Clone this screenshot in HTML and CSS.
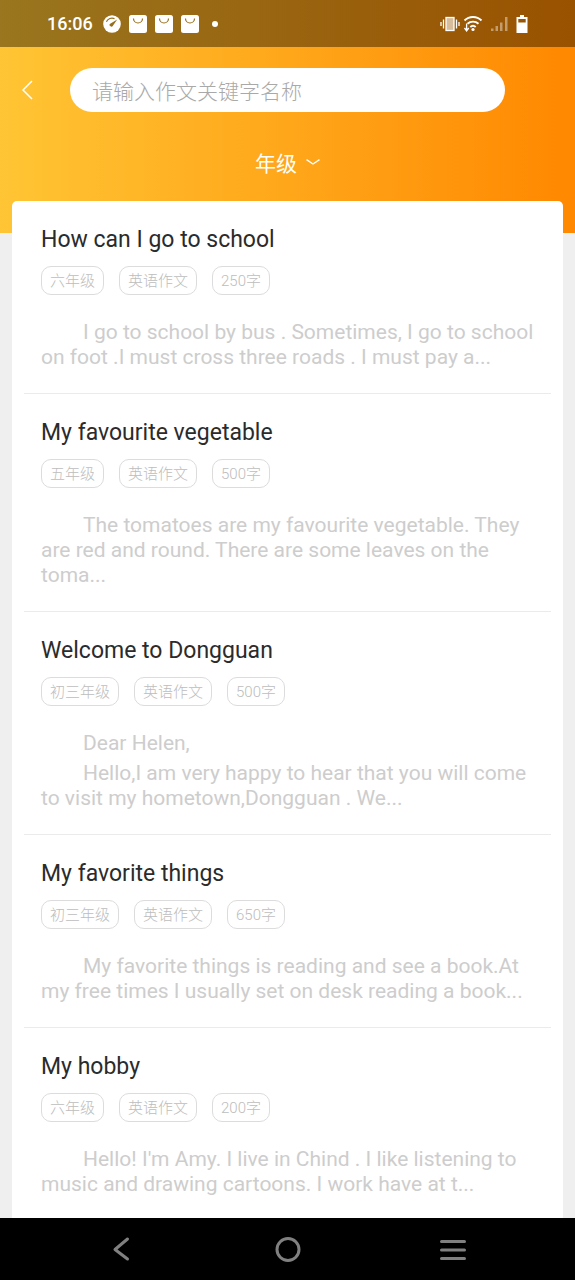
FILE: index.html
```html
<!DOCTYPE html>
<html lang="zh-CN">
<head>
<meta charset="utf-8">
<meta name="viewport" content="width=device-width, initial-scale=1">
<title>英语作文</title>
<link rel="stylesheet" href="styles.css">
</head>
<body>
<div class="screen">
  <div class="status">
    <div class="status-left">
      <span class="clock">16:06</span>
      <svg class="app-icon" viewBox="0 0 18 18"><circle cx="9" cy="9" r="8.8" fill="#fff"/><path d="M3.400 6.800A6.200 6.200 0 0 1 11.500 3.600" fill="none" stroke="#98701a" stroke-width="1.200"/><path d="M14.200 4.600 7.600 8.400a1.700 1.700 0 1 0 2.300 2.300z" fill="#98701a"/></svg>
      <svg class="app-icon" viewBox="0 0 18 18"><rect width="18" height="18" rx="2.5" fill="#fff"/><path d="M4.500 3.500a4.500 4.500 0 0 0 9 0" fill="none" stroke="#98701a" stroke-width="1.200"/></svg>
      <svg class="app-icon" viewBox="0 0 18 18"><rect width="18" height="18" rx="2.5" fill="#fff"/><path d="M4.500 3.500a4.500 4.500 0 0 0 9 0" fill="none" stroke="#98701a" stroke-width="1.200"/></svg>
      <svg class="app-icon" viewBox="0 0 18 18"><rect width="18" height="18" rx="2.5" fill="#fff"/><path d="M4.500 3.500a4.500 4.500 0 0 0 9 0" fill="none" stroke="#98701a" stroke-width="1.200"/></svg>
      <span class="more-dot"></span>
    </div>
    <svg class="status-right" viewBox="0 0 90 20">
      <g fill="none" stroke="#fff" stroke-width="1.300"><rect x="6" y="3.500" width="8" height="13" fill="#fff" fill-opacity=".6"/><path d="M3.500 5.500v9M1 8v4M16.500 5.500v9M19 8v4"/></g>
      <g fill="none" stroke="#fff" stroke-width="1.900"><path d="M24.500 6.500a12 12 0 0 1 17 0M27.500 9.800a8 8 0 0 1 11 0M30.300 13a4 4 0 0 1 5.400 0"/></g>
      <circle cx="33" cy="15.500" r="1.600" fill="#fff"/><path d="M26.600 9.500v7M24.500 14l2.100 2.800 2.100-2.800" fill="none" stroke="#fff" stroke-width="1.300"/>
      <g fill="#fff" fill-opacity=".42"><rect x="51" y="14.500" width="2.500" height="2.500"/><rect x="55.500" y="12" width="2.500" height="5"/><rect x="60" y="8.500" width="2.500" height="8.500"/><rect x="65" y="3" width="2.500" height="14"/></g>
      <path fill="#fff" fill-rule="evenodd" d="M80 1h4v2h3.500v16h-11V3H80zM78.300 5v3.500h7.400V5z"/>
    </svg>
  </div>

  <main class="page">
    <header class="top">
      <div class="search-row">
        <button class="back" type="button" aria-label="返回"><svg viewBox="0 0 12 20"><path d="M11 1 2 10l9 9" fill="none" stroke="#fff" stroke-width="1.500"/></svg></button>
        <input class="search" type="text" aria-label="搜索作文" placeholder="请输入作文关键字名称">
      </div>
      <button class="grade" type="button">年级<svg viewBox="0 0 14 6"><path d="M.5.700 7 5 13.500.700" fill="none" stroke="#fff" stroke-width="1.400"/></svg></button>
    </header>

    <section class="card">
      <article class="essay">
        <h2 class="title">How can I go to school</h2>
        <div class="tags"><span class="tag">六年级</span><span class="tag">英语作文</span><span class="tag">250字</span></div>
        <div class="excerpt"><p>I go to school by bus . Sometimes, I go to school on foot .I must cross three roads . I must pay a...</p></div>
      </article>
      <article class="essay">
        <h2 class="title">My favourite vegetable</h2>
        <div class="tags"><span class="tag">五年级</span><span class="tag">英语作文</span><span class="tag">500字</span></div>
        <div class="excerpt"><p>The tomatoes are my favourite vegetable. They are red and round. There are some leaves on the toma...</p></div>
      </article>
      <article class="essay">
        <h2 class="title">Welcome to Dongguan</h2>
        <div class="tags"><span class="tag">初三年级</span><span class="tag">英语作文</span><span class="tag">500字</span></div>
        <div class="excerpt"><p>Dear Helen,</p><p>Hello,I am very happy to hear that you will come to visit my hometown,Dongguan . We...</p></div>
      </article>
      <article class="essay">
        <h2 class="title">My favorite things</h2>
        <div class="tags"><span class="tag">初三年级</span><span class="tag">英语作文</span><span class="tag">650字</span></div>
        <div class="excerpt"><p>My favorite things is reading and see a book.At my free times I usually set on desk reading a book...</p></div>
      </article>
      <article class="essay">
        <h2 class="title">My hobby</h2>
        <div class="tags"><span class="tag">六年级</span><span class="tag">英语作文</span><span class="tag">200字</span></div>
        <div class="excerpt"><p>Hello! I'm Amy. I live in Chind . I like listening to music and drawing cartoons. I work have at t...</p></div>
      </article>
    </section>
  </main>

  <nav class="system-nav">
    <button type="button" aria-label="Back"><svg viewBox="0 0 28 28"><path d="M18.500 4 6 14.500 18.500 24" fill="none" stroke="#808080" stroke-width="3" stroke-linecap="round" stroke-linejoin="round"/></svg></button>
    <button type="button" aria-label="Home"><svg viewBox="0 0 28 28"><circle cx="14" cy="14.500" r="11" fill="none" stroke="#808080" stroke-width="3"/></svg></button>
    <button type="button" aria-label="Recent apps"><svg viewBox="0 0 28 28"><path d="M2.500 6.500h23M2.500 15h23M2.500 23.500h23" fill="none" stroke="#808080" stroke-width="3" stroke-linecap="round"/></svg></button>
  </nav>
</div>
</body>
</html>
```

FILE: styles.css
```css
* {
  box-sizing: border-box;
}

body,
h2,
p {
  margin: 0;
}

body {
  font-family: Roboto, "Noto Sans CJK SC", sans-serif;
  background: #efefef;
}

button {
  padding: 0;
  border: 0;
  background: none;
  color: inherit;
  font: inherit;
  display: flex;
  align-items: center;
  justify-content: center;
}

.screen {
  height: 100vh;
  display: flex;
  flex-direction: column;
}

.status {
  flex: none;
  height: 47px;
  padding: 0 45px 0 47px;
  display: flex;
  align-items: center;
  justify-content: space-between;
  color: #fff;
  background: linear-gradient(90deg, #99761f, #995200);
}

.status-left {
  display: flex;
  align-items: center;
  gap: 8px;
}

.clock {
  font-size: 18px;
  font-weight: 500;
  margin-right: 2px;
}

.app-icon {
  width: 18px;
  height: 18px;
}

.more-dot {
  width: 6px;
  height: 6px;
  margin-left: 5px;
  border-radius: 50%;
  background: #fff;
}

.status-right {
  width: 90px;
  height: 20px;
}

.page {
  flex: 1;
  min-height: 0;
  overflow-y: auto;
  scrollbar-width: none;
}

.top {
  padding: 21px 0 57px;
  display: flex;
  flex-direction: column;
  align-items: center;
  gap: 35px;
  color: #fff;
  background: linear-gradient(90deg, #ffc534, #ff8800);
}

.search-row {
  align-self: stretch;
  display: flex;
  padding: 0 70px 0 15px;
}

.back {
  flex: none;
  width: 24px;
  height: 44px;
  margin-right: 31px;
}

.back svg {
  width: 12px;
  height: 20px;
}

.search {
  flex: 1;
  min-width: 0;
  height: 44px;
  padding: 3px 22px 0;
  border: 0;
  border-radius: 22px;
  outline: 0;
  background: #fff;
  color: #333;
  font: 300 21px Roboto, "Noto Sans CJK SC", sans-serif;
}

.search::placeholder {
  color: #a9a9a9;
}

.grade {
  height: 29px;
  gap: 9px;
  font-size: 21px;
}

.grade svg {
  width: 14px;
  height: 6px;
}

.card {
  position: relative;
  margin: -32px 12px 0;
  padding: 0 12px;
  border-radius: 5px 5px 0 0;
  background: #fff;
}

.essay {
  padding: 25px 17px 23px;
  border-bottom: 1px solid #ebebeb;
}

.title {
  font-size: 23px;
  font-weight: 400;
  line-height: 28px;
  color: #2b2b2b;
}

.tags {
  display: flex;
  gap: 15px;
  margin: 12px 0 25px;
}

.tag {
  height: 29px;
  padding: 0 8px;
  border: 1px solid #dcdcdc;
  border-radius: 10px;
  font-size: 15px;
  font-weight: 300;
  line-height: 29px;
  color: #bdbdbd;
}

.excerpt {
  display: flex;
  flex-direction: column;
  gap: 5px;
  font-size: 21px;
  line-height: 25px;
  color: #cdcdcd;
}

.excerpt p {
  text-indent: 2em;
}

.system-nav {
  flex: none;
  height: 62px;
  padding: 0 40px;
  display: grid;
  grid-template-columns: repeat(3, 1fr);
  background: #000;
}

.system-nav svg {
  width: 28px;
  height: 28px;
}
```
